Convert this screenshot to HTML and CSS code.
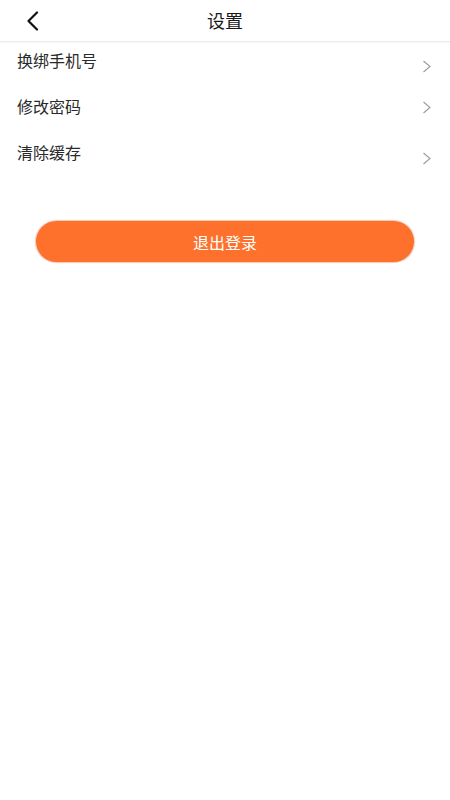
FILE: index.html
```html
<!DOCTYPE html>
<html lang="zh">
<head>
<meta charset="utf-8">
<title>设置</title>
<link rel="stylesheet" href="styles.css">
</head>
<body>
<div class="page">
  <header class="topbar">
    <span class="back">
      <svg width="14" height="20" viewBox="0 0 14 20"><path d="M11 1.5 L2.5 10 L11 18.5" fill="none" stroke="#111" stroke-width="2.2" stroke-linecap="round" stroke-linejoin="round"/></svg>
    </span>
    <h1 class="title">设置</h1>
  </header>
  <ul class="list">
    <li class="row"><span class="label">换绑手机号</span><svg class="chev" width="10" height="13" viewBox="0 0 10 13"><path d="M1.5 1 L8 6.5 L1.5 12" fill="none" stroke="#9a9a9a" stroke-width="1.1"/></svg></li>
    <li class="row row-mid"><span class="label">修改密码</span><svg class="chev" width="10" height="13" viewBox="0 0 10 13"><path d="M1.5 1 L8 6.5 L1.5 12" fill="none" stroke="#9a9a9a" stroke-width="1.1"/></svg></li>
    <li class="row"><span class="label">清除缓存</span><svg class="chev" width="10" height="13" viewBox="0 0 10 13"><path d="M1.5 1 L8 6.5 L1.5 12" fill="none" stroke="#9a9a9a" stroke-width="1.1"/></svg></li>
  </ul>
  <div class="actions">
    <button class="logout">退出登录</button>
  </div>
</div>
</body>
</html>
```
FILE: styles.css
```css
* { box-sizing: border-box; }
html, body {
  margin: 0;
  padding: 0;
  background: #fff;
  font-family: "Noto Sans CJK SC", "Noto Sans", sans-serif;
}
.page {
  width: 450px;
  min-height: 800px;
  background: #fff;
}
.topbar {
  height: 42px;
  display: flex;
  align-items: center;
  justify-content: center;
  position: relative;
  border-bottom: 1px solid #ececec;
  box-shadow: 0 1px 2px rgba(0,0,0,0.04);
}
.back {
  position: absolute;
  left: 26px;
  top: 11px;
  display: flex;
}
.title {
  margin: 0 0 2px;
  font-size: 18px;
  font-weight: 400;
  color: #1a1a1a;
  line-height: 40px;
}
.list {
  list-style: none;
  margin: 0;
  padding: 7px 0 0;
}
.row {
  height: 46px;
  display: flex;
  justify-content: space-between;
  align-items: flex-start;
  padding: 0 18px 0 17px;
}
.label {
  font-size: 16px;
  line-height: 22px;
  color: #2a2a2a;
}
.chev {
  margin-top: 11px;
}
.row-mid .chev {
  margin-top: 6px;
}
.actions {
  padding: 34px 36px 0;
}
.logout {
  display: block;
  width: 100%;
  height: 41px;
  border: none;
  border-radius: 21px;
  background: #fd712c;
  box-shadow: 0 0 1px 1px rgba(220, 90, 30, 0.35);
  color: #fff;
  font-family: "Noto Sans CJK SC", "Noto Sans", sans-serif;
  font-size: 16px;
  padding: 0;
}
```
